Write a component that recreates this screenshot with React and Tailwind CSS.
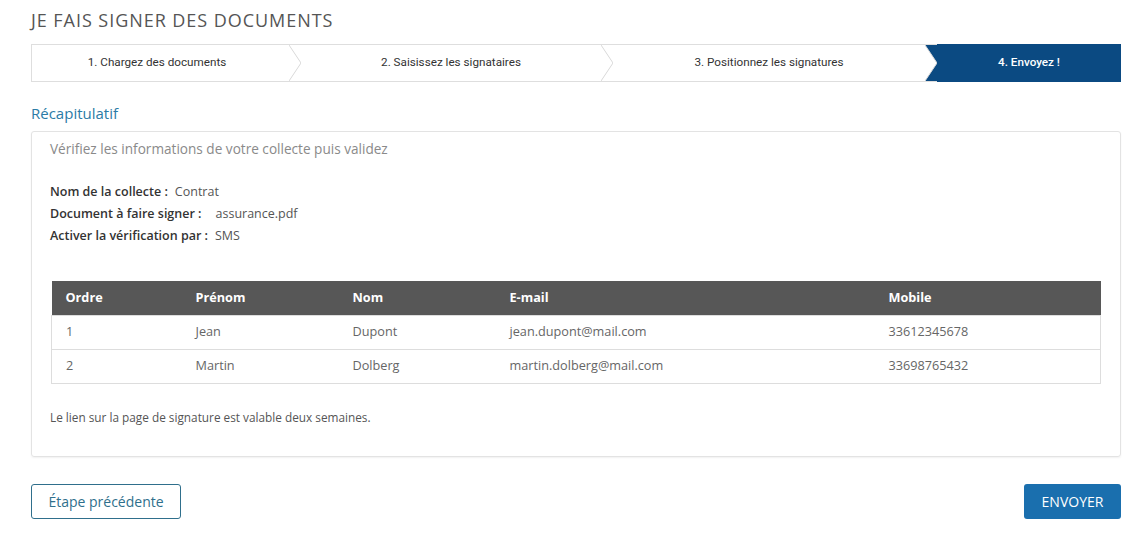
const steps = [
  { label: "1. Chargez des documents", w: "w-[257px] pr-[7px]" },
  { label: "2. Saisissez les signataires", w: "w-[300px]" },
  { label: "3. Positionnez les signatures", w: "w-[312px]" },
];

const signers = [
  { ordre: 1, prenom: "Jean", nom: "Dupont", email: "jean.dupont@mail.com", mobile: "33612345678" },
  { ordre: 2, prenom: "Martin", nom: "Dolberg", email: "martin.dolberg@mail.com", mobile: "33698765432" },
];

const Chevron = ({ active }) => (
  <svg width="12" height="36" viewBox="0 0 12 36" className="shrink-0 block">
    {active && <polygon points="0,0 12,0 12,36 0,36 12,18" fill="#0b4a82" />}
    <polyline points="0,0 12,18 0,36" fill="none" stroke="#d9d9d9" strokeWidth="1" />
  </svg>
);

const App = () => {
  return (
    <div className="w-[1146px] h-[538px] bg-white pl-[31px] pt-[9px] font-['Open_Sans',sans-serif] text-[#444]">
      <div className="w-[1090px]">
        <h1 className="text-[18px] leading-[22px] tracking-[0.95px] text-[#555] uppercase">
          Je fais signer des documents
        </h1>

        <div className="mt-[13px] flex h-[38px] border border-[#dedede] font-['Roboto',sans-serif] text-[11.7px] text-[#333]">
          {steps.map((s) => (
            <div key={s.label} className="flex">
              <div className={`${s.w} flex items-center justify-center`}>{s.label}</div>
              <Chevron active={s.label.startsWith("3")} />
            </div>
          ))}
          <div className="flex-1 -my-px -mr-px bg-[#0b4a82] flex items-center justify-center text-white font-medium">
            4. Envoyez !
          </div>
        </div>

        <h2 className="mt-[20px] text-[15px] leading-[22px] text-[#2b7ba6]">Récapitulatif</h2>

        <div className="mt-[7px] border border-[#e3e3e3] rounded-[3px] shadow-[0_1px_2px_rgba(0,0,0,0.06)] pl-[18px] pr-[19px] pt-[7px] pb-[30px]">
          <p className="text-[13.6px] leading-[20px] text-[#8a8a8a]">
            Vérifiez les informations de votre collecte puis validez
          </p>

          <div className="mt-[22px] text-[12.5px] leading-[22px]">
            <div>
              <span className="font-semibold text-[#333]">Nom de la collecte :</span>
              <span className="ml-[7px] text-[#555]">Contrat</span>
            </div>
            <div>
              <span className="font-semibold text-[#333]">Document à faire signer :</span>
              <span className="ml-[14px] text-[#555]">assurance.pdf</span>
            </div>
            <div>
              <span className="font-semibold text-[#333]">Activer la vérification par :</span>
              <span className="ml-[7px] text-[#555]">SMS</span>
            </div>
          </div>

          <table className="mt-[34px] ml-px w-[1050px] border-collapse text-[12.7px] text-left">
            <thead>
              <tr className="bg-[#575757] text-white h-[34px]">
                <th className="w-[130px] pl-[14px] font-bold">Ordre</th>
                <th className="w-[157px] pl-[14px] font-bold">Prénom</th>
                <th className="w-[157px] pl-[14px] font-bold">Nom</th>
                <th className="w-[379px] pl-[14px] font-bold">E-mail</th>
                <th className="pl-[14px] font-bold">Mobile</th>
              </tr>
            </thead>
            <tbody className="text-[#666]">
              {signers.map((p) => (
                <tr key={p.ordre} className="h-[34px] border border-[#dddddd]">
                  <td className="pl-[14px]">{p.ordre}</td>
                  <td className="pl-[14px]">{p.prenom}</td>
                  <td className="pl-[14px]">{p.nom}</td>
                  <td className="pl-[14px]">{p.email}</td>
                  <td className="pl-[14px]">{p.mobile}</td>
                </tr>
              ))}
            </tbody>
          </table>

          <p className="mt-[24px] text-[11.8px] leading-[18px] text-[#555]">
            Le lien sur la page de signature est valable deux semaines.
          </p>
        </div>

        <div className="mt-[27px] flex justify-between">
          <button className="w-[150px] h-[35px] border border-[#2f6f8c] rounded-[3px] text-[14px] text-[#2f6f8c]">
            Étape précédente
          </button>
          <button className="w-[97px] h-[35px] rounded-[3px] bg-[#1a6fae] text-white text-[14px] uppercase">
            Envoyer
          </button>
        </div>
      </div>
    </div>
  );
};

export default App;
